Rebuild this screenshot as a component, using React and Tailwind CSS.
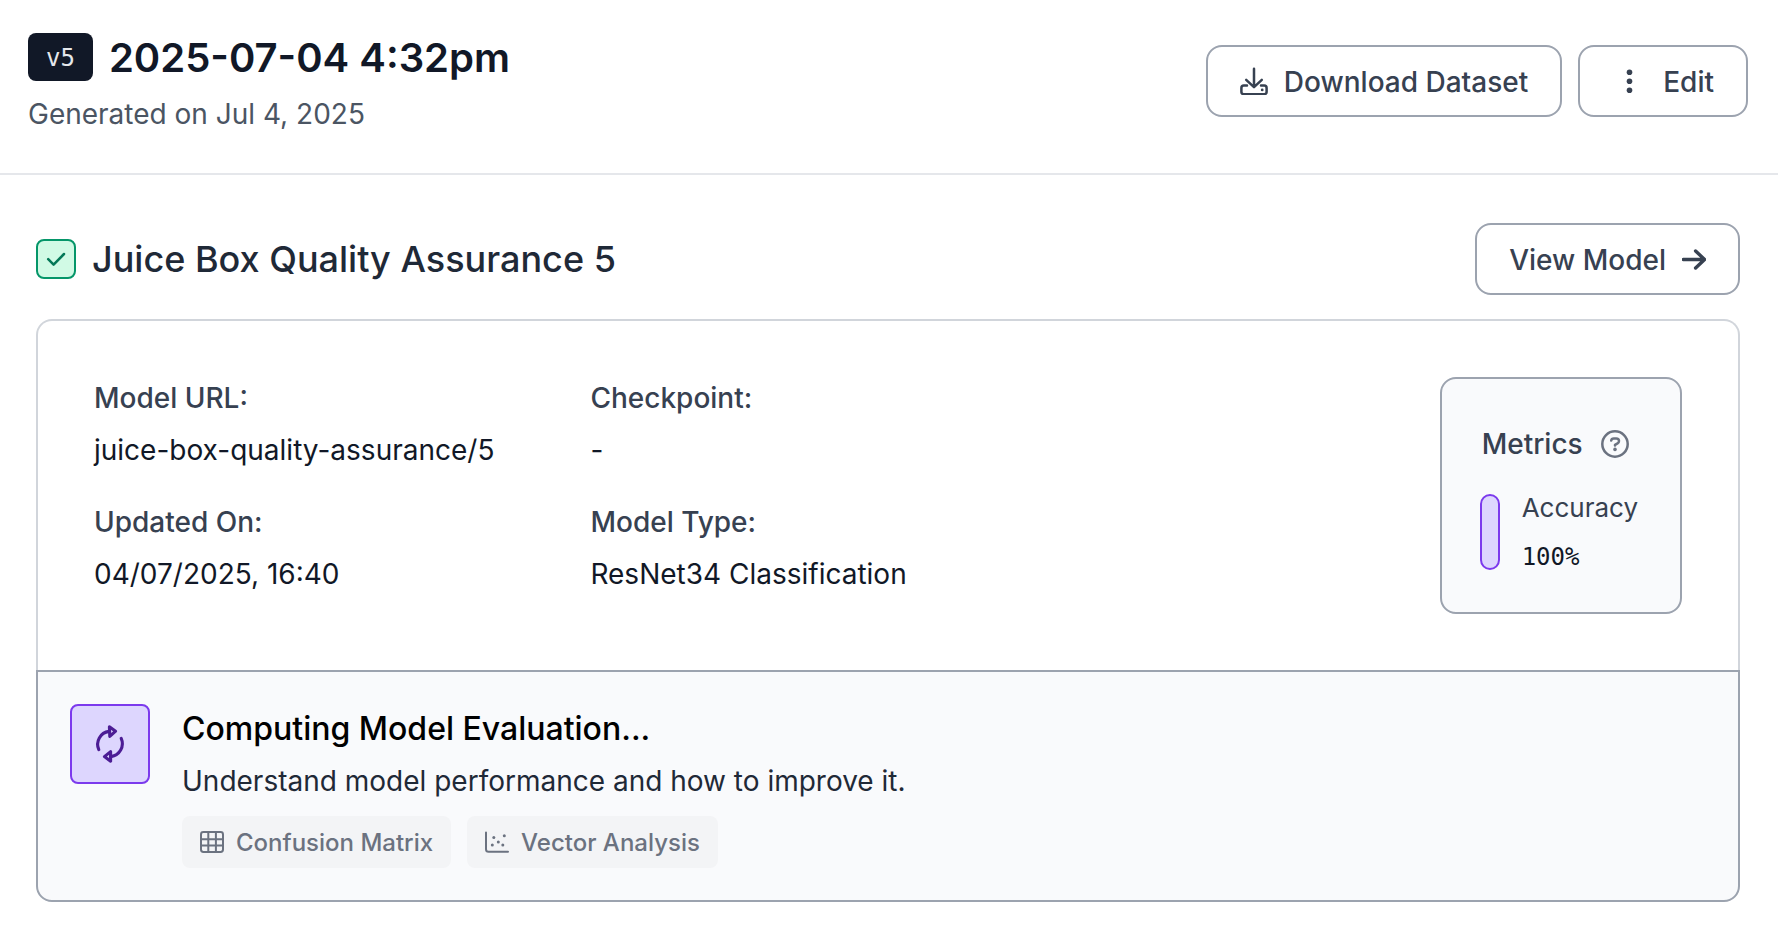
const details = [
  [
    { label: "Model URL:", value: "juice-box-quality-assurance/5" },
    { label: "Updated On:", value: "04/07/2025, 16:40" },
  ],
  [
    { label: "Checkpoint:", value: "-" },
    { label: "Model Type:", value: "ResNet34 Classification" },
  ],
];

const buttonClass =
  "flex h-[72px] items-center gap-4 rounded-2xl border-2 border-[#9ca3af] bg-white px-8 text-[28px] leading-10 font-medium text-[#374151]";

function DownloadIcon() {
  return (
    <svg width="28" height="28" viewBox="0 0 28 28" fill="none" stroke="currentColor" strokeWidth="2.5" strokeLinecap="round" strokeLinejoin="round" aria-hidden="true">
      <path d="M14 1.8V19.5M6.2 12.8L14 20.2L21.8 12.8" />
      <path d="M7 18.6H3.8A2.4 2.4 0 0 0 1.4 21V24.9A2.4 2.4 0 0 0 3.8 27.3H24.2A2.4 2.4 0 0 0 26.6 24.9V21A2.4 2.4 0 0 0 24.2 18.6H21" />
      <circle cx="22.2" cy="22.9" r="1.4" fill="currentColor" stroke="none" />
    </svg>
  );
}

function DotsIcon() {
  return (
    <svg width="35" height="28" viewBox="0 0 35 28" fill="currentColor" aria-hidden="true">
      <circle cx="17.5" cy="5.2" r="2.8" />
      <circle cx="17.5" cy="14.2" r="2.8" />
      <circle cx="17.5" cy="23.2" r="2.8" />
    </svg>
  );
}

function CheckIcon() {
  return (
    <svg width="36" height="36" viewBox="0 0 36 36" fill="none" stroke="currentColor" strokeWidth="2.5" strokeLinecap="round" strokeLinejoin="round" aria-hidden="true">
      <path d="M10.2 18.2L15.6 23.6L26 13" />
    </svg>
  );
}

function ArrowIcon() {
  return (
    <svg width="24" height="28" viewBox="0 0 24 28" fill="none" stroke="currentColor" strokeWidth="3.4" strokeLinecap="round" strokeLinejoin="round" aria-hidden="true">
      <path d="M1.2 14.5H22M13.6 6L22.6 14.5L13.6 23" />
    </svg>
  );
}

function QuestionIcon() {
  return (
    <svg width="28" height="28" viewBox="0 0 28 28" fill="none" stroke="currentColor" strokeWidth="2.5" strokeLinecap="round" strokeLinejoin="round" aria-hidden="true">
      <circle cx="14" cy="14" r="12.7" />
      <path d="M10.2 10.6C10.4 9.2 11.4 8.4 12.8 8.4H15.2C16.8 8.4 18 9.6 18 11C18 12 17.5 12.8 16.6 13.3L14 14.8V15.4" />
      <circle cx="14" cy="19.4" r="1.8" fill="currentColor" stroke="none" />
    </svg>
  );
}

function SyncIcon() {
  return (
    <svg width="40" height="40" viewBox="0 0 40 40" fill="none" stroke="currentColor" strokeWidth="3.1" strokeLinecap="round" strokeLinejoin="round" aria-hidden="true">
      <path d="M8.8 25.6A13 13 0 0 1 19 7.4" />
      <path d="M19.4 2.8L25.6 7.2L19.8 12.4Z" />
      <path d="M31.2 14.4A13 13 0 0 1 21 32.6" />
      <path d="M20.6 27.6L14.4 32.6L20.6 37.2Z" />
    </svg>
  );
}

function TableIcon() {
  return (
    <svg width="24" height="24" viewBox="0 0 24 24" fill="none" stroke="currentColor" strokeWidth="2" aria-hidden="true">
      <rect x="1" y="2" width="22" height="20" rx="2.4" />
      <path d="M1 9.2H23M1 15.4H23M8.3 2V22M15.9 2V22" />
    </svg>
  );
}

function ScatterIcon() {
  return (
    <svg width="24" height="24" viewBox="0 0 24 24" fill="currentColor" aria-hidden="true">
      <path d="M1 2.4V19.2A2.6 2.6 0 0 0 3.6 21.8H23" fill="none" stroke="currentColor" strokeWidth="2" strokeLinecap="round" />
      <circle cx="8.8" cy="7.4" r="1.5" />
      <circle cx="19.3" cy="5.8" r="1.5" />
      <circle cx="13.3" cy="12" r="1.5" />
      <circle cx="7.3" cy="15" r="1.5" />
      <circle cx="17.8" cy="15" r="1.5" />
    </svg>
  );
}

function Chip({ icon, children }) {
  return (
    <li className="flex h-[52px] items-center gap-3 rounded-lg bg-[#f3f4f6] px-[18px] text-2xl font-medium text-[#6b7280]">
      {icon}
      <span className="pt-0.5">{children}</span>
    </li>
  );
}

function Metrics() {
  return (
    <section className="rounded-2xl border-2 border-[#9ca3af] bg-[#f9fafc] pt-9 pr-[42px] pb-[34px] pl-[38px]">
      <div className="flex items-center gap-[18px] pl-0.5">
        <h3 className="text-[28px] leading-[58px] font-medium text-[#374151]">Metrics</h3>
        <button type="button" aria-label="About metrics" className="text-[#6b7280]">
          <QuestionIcon />
        </button>
      </div>
      <div className="mt-[15px] flex items-start gap-[22px]">
        <div className="mt-1.5 h-[76px] w-5 rounded-full border-2 border-[#7c3aed] bg-[#ddd6fe]" />
        <dl className="flex flex-col gap-2">
          <dt className="text-[26px] leading-10 text-[#374151]">Accuracy</dt>
          <dd className="font-['DejaVu_Sans_Mono',monospace] text-2xl leading-[42px] text-[#111827]">100%</dd>
        </dl>
      </div>
    </section>
  );
}

export default function App() {
  return (
    <div className="bg-white font-['Inter',sans-serif]">
      <header className="flex items-start justify-between border-b-2 border-[#e5e7eb] pt-[33px] pr-[30px] pb-[38px] pl-7">
        <div>
          <div className="flex items-start gap-4">
            <span className="flex h-12 items-center rounded-lg bg-[#111827] px-[18px] pt-0.5 font-['DejaVu_Sans_Mono',monospace] text-2xl text-[#e5e7eb]">
              v5
            </span>
            <h1 className="text-[40px] leading-[50px] font-semibold text-[#111827]">2025-07-04 4:32pm</h1>
          </div>
          <p className="mt-2.5 text-[28px] leading-[42px] text-[#4b5563]">Generated on Jul 4, 2025</p>
        </div>
        <div className="mt-3 flex gap-4">
          <button type="button" className={buttonClass}>
            <DownloadIcon />
            <span className="pt-0.5">Download Dataset</span>
          </button>
          <button type="button" className={buttonClass}>
            <DotsIcon />
            <span className="pt-0.5">Edit</span>
          </button>
        </div>
      </header>

      <main className="pt-12 pr-[38px] pb-8 pl-9">
        <div className="flex items-center justify-between">
          <div className="flex items-center gap-4">
            <span className="h-10 w-10 rounded-lg border-2 border-[#059669] bg-[#d1fae5] text-[#047857]">
              <CheckIcon />
            </span>
            <h2 className="text-4xl font-medium text-[#1f2937]">Juice Box Quality Assurance 5</h2>
          </div>
          <a href="#model" className={buttonClass}>
            <span className="pt-0.5">View Model</span>
            <ArrowIcon />
          </a>
        </div>

        <div className="mt-6 flex items-start justify-between rounded-t-2xl border-x-2 border-t-2 border-[#d1d5db] p-14">
          <div className="flex gap-24">
            {details.map((column) => (
              <dl key={column[0].label} className="flex flex-col gap-[30px] text-[28px] leading-[42px]">
                {column.map((item) => (
                  <div key={item.label} className="flex flex-col gap-2.5">
                    <dt className="font-medium text-[#374151]">{item.label}</dt>
                    <dd className="text-[#111827]">{item.value}</dd>
                  </div>
                ))}
              </dl>
            ))}
          </div>
          <Metrics />
        </div>

        <section className="flex items-start gap-8 rounded-b-2xl border-2 border-[#9ca3af] bg-[#f9fafc] p-8">
          <div className="flex h-20 w-20 items-center justify-center rounded-lg border-2 border-[#7c3aed] bg-[#ddd6fe] text-[#4c1d95]">
            <SyncIcon />
          </div>
          <div>
            <h3 className="text-[32px] leading-[50px] font-medium text-black">Computing Model Evaluation...</h3>
            <p className="mt-1.5 text-[28px] leading-[42px] text-[#1f2937]">Understand model performance and how to improve it.</p>
            <ul className="mt-3.5 flex gap-4">
              <Chip icon={<TableIcon />}>Confusion Matrix</Chip>
              <Chip icon={<ScatterIcon />}>Vector Analysis</Chip>
            </ul>
          </div>
        </section>
      </main>
    </div>
  );
}
